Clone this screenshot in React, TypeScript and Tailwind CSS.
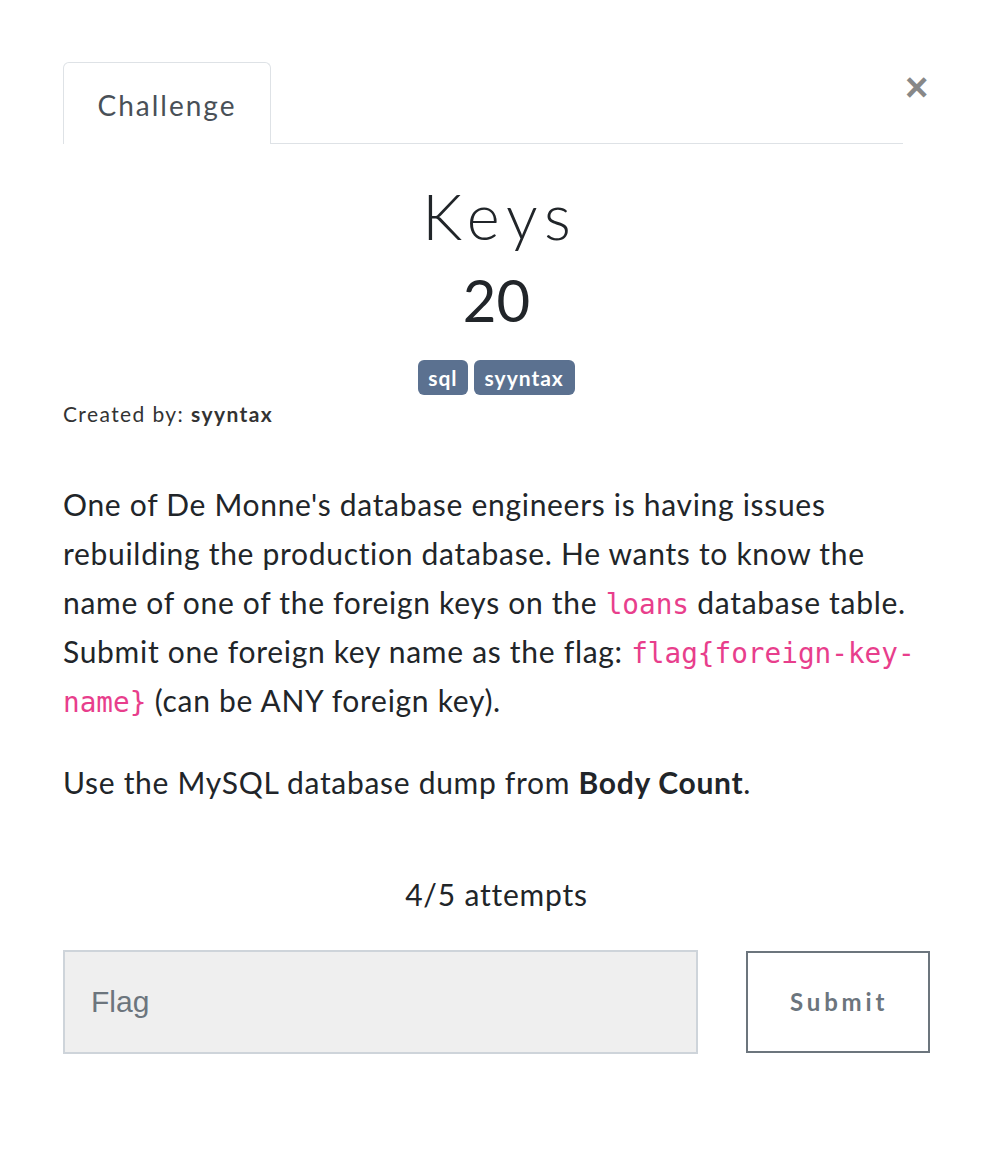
import React from "react";

export default function App() {
  const lato = { fontFamily: "Lato, 'Noto Sans', sans-serif" } as React.CSSProperties;
  return (
    <div className="w-[995px] h-[1150px] bg-white" style={lato}>
      <div className="ml-[63px] w-[867px] pt-[62px]">
        <div className="flex">
          <div className="flex w-[840px] items-end">
            <div className="h-[82px] w-[208px] rounded-t-[6px] border border-b-0 border-[#dee2e6] bg-white flex items-center justify-center pt-[2px] text-[28px] tracking-[2px] text-[#495057] font-['Lato']">
              Challenge
            </div>
            <div className="flex-1 border-b border-[#dee2e6]" />
          </div>
          <div className="mt-[5px] ml-[2px] text-[40px] leading-[40px] text-[#888] font-bold font-['Liberation_Sans']">×</div>
        </div>

        <div className="flex flex-col items-center">
          <h2 className="mt-[34px] text-[63px] leading-[76px] font-light tracking-[7px] pl-[7px] text-[#212529] font-['Lato']">Keys</h2>
          <h3 className="mt-[12px] text-[58px] leading-[68px] font-normal text-[#212529] font-['Lato']">20</h3>
          <div className="mt-[26px] flex gap-[6px]">
            <span className="h-[35px] px-[10px] rounded-[6px] bg-[#5b7190] text-white text-[21px] tracking-[1px] font-bold leading-[35px]">sql</span>
            <span className="h-[35px] px-[11px] rounded-[6px] bg-[#5b7190] text-white text-[21px] tracking-[1px] font-bold leading-[35px]">syyntax</span>
          </div>
        </div>
        <div className="mt-[7px] text-[21px] leading-[24px] tracking-[1.4px] text-[#333]">
          Created by: <span className="font-bold">syyntax</span>
        </div>

        <div className="mt-[54px] text-[30px] leading-[49px] tracking-[0.7px] text-[#212529]">
          <p>
            One of De Monne's database engineers is having issues rebuilding the production database. He wants to know the name of one of the foreign keys on the{" "}
            <code className="text-[#e83e8c] text-[27.7px] leading-none tracking-normal font-['DejaVu_Sans_Mono']">loans</code> database table. Submit one foreign key name as the flag:{" "}
            <code className="text-[#e83e8c] text-[27.7px] leading-none tracking-normal font-['DejaVu_Sans_Mono']">flag{"{"}foreign-key-name{"}"}</code> (can be ANY foreign key).
          </p>
          <p className="mt-[33px]">
            Use the MySQL database dump from <span className="font-bold">Body Count</span>.
          </p>
        </div>

        <div className="mt-[67px] text-center text-[30px] leading-[40px] tracking-[0.8px] text-[#212529]">4/5 attempts</div>

        <div className="mt-[36px] flex items-center">
          <input
            placeholder="Flag"
            className="h-[104px] w-[636px] border-2 border-[#ced4da] bg-[#efefef] px-[26px] text-[30px] text-[#495057] placeholder:text-[#6c757d] font-['Liberation_Sans'] outline-none"
          />
          <button className="ml-[48px] h-[102px] w-[184px] border-2 border-[#6c757d] bg-white pl-[2px] text-[24px] font-bold tracking-[3.8px] text-[#6c757d] font-['Lato']">
            Submit
          </button>
        </div>
      </div>
    </div>
  );
}
